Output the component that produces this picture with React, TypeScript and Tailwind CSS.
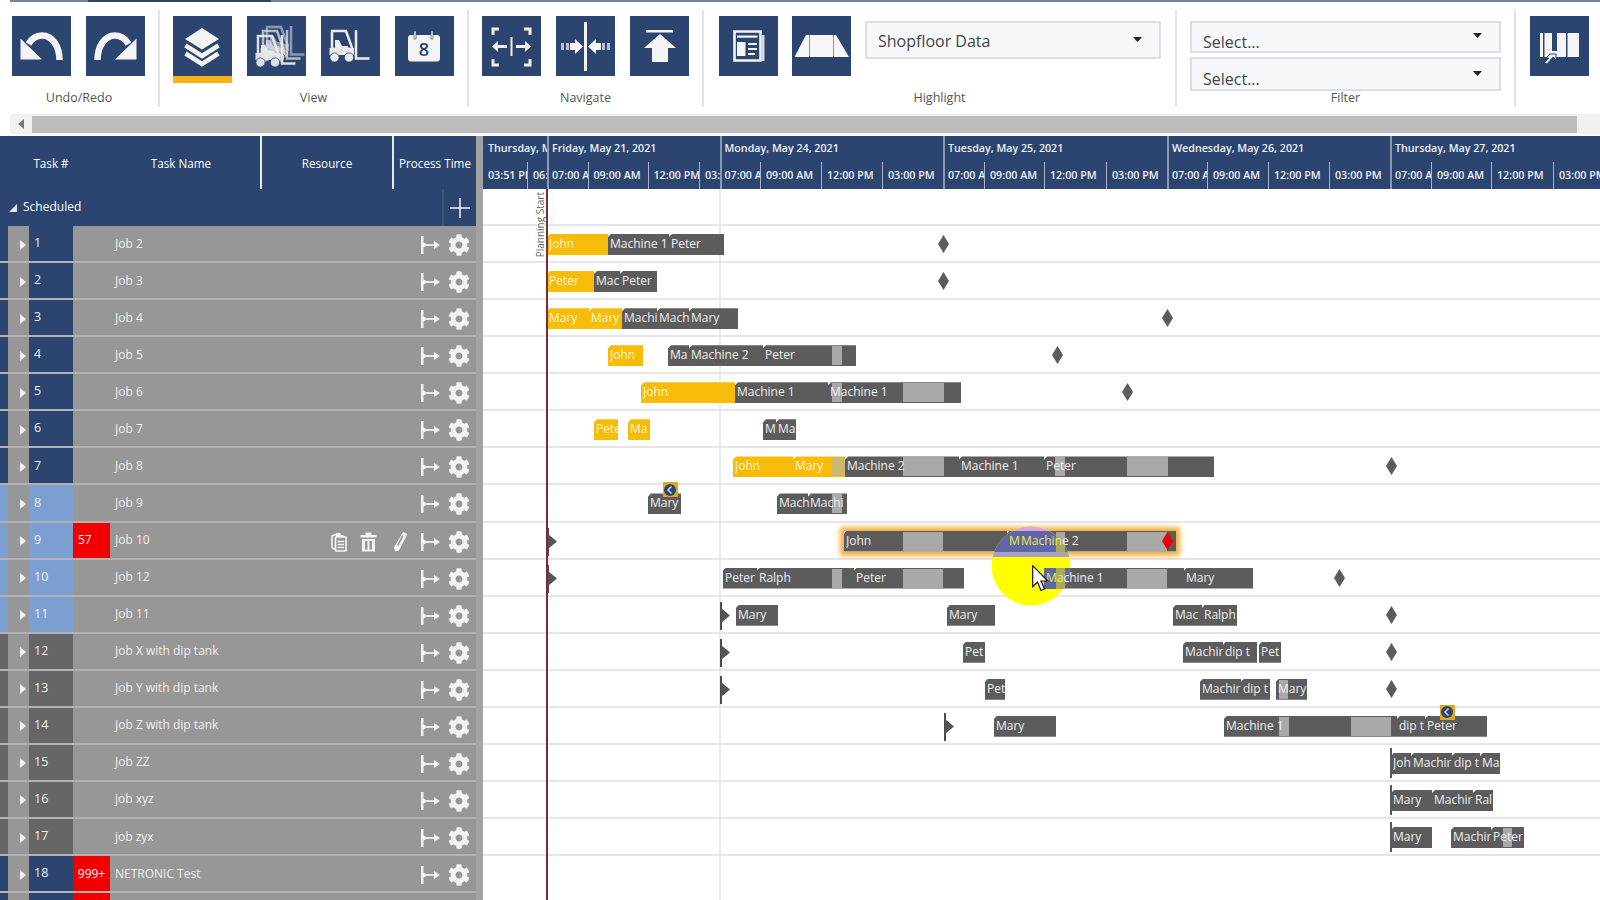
import React from "react";
import { FaCog } from "react-icons/fa";

const NAVY = "bg-[#2b4570]";

function IconBtn({ children, active }: { children: React.ReactNode; active?: boolean }) {
  return (
    <div className="relative w-[59px] h-[60px] shrink-0 bg-[#2b4570]">
      <svg viewBox="0 0 59 60" className="w-full h-full">{children}</svg>
      {active && <div className="absolute left-0 right-0 top-[60px] h-[7px] bg-[#f6b312]" />}
    </div>
  );
}

const Undo = () => (
  <g fill="#f4f4f4">
    <path d="M47.5 44 C47.5 30 40 19.5 30 19.5 C24 19.5 20 22 16.5 28" fill="none" stroke="#f4f4f4" strokeWidth="6.5" />
    <path d="M8.5 22.5 L8.5 43.5 L30 43.5 Z" />
  </g>
);
const Layers = () => (
  <g>
    <path d="M29 12 L46 23 L29 33.5 L12 23 Z" fill="#f4f4f4" />
    <path d="M12.5 29.5 L29 40 L45.5 29.5" fill="none" stroke="#f4f4f4" strokeWidth="4.5" />
    <path d="M12.5 37.5 L29 48 L45.5 37.5" fill="none" stroke="#f4f4f4" strokeWidth="4.5" />
  </g>
);
const Fork = ({ op = 1, dx = 0, dy = 0 }: { op?: number; dx?: number; dy?: number }) => (
  <g transform={`translate(${dx} ${dy})`} opacity={op} fill="none" stroke="#ececec">
    <path d="M35 14 V42.5 H48.5" strokeWidth="2.5" />
    <path d="M11 15 H25 L31.5 33 H11 Z" strokeWidth="2.5" />
    <path d="M14 33 V24 L18 24 L21 30 H27 L28 33 Z" fill="#ececec" stroke="none" />
    <rect x="8.5" y="32" width="24.5" height="7" fill="#ececec" stroke="none" />
    <circle cx="13.5" cy="41.5" r="4.6" fill="#ececec" stroke="#2b4570" strokeWidth="0.8" />
    <circle cx="28" cy="41.5" r="4.6" fill="#ececec" stroke="#2b4570" strokeWidth="0.8" />
  </g>
);
const ManyForks = () => (
  <g>
    <Fork dx={9} dy={-4} op={0.5} />
    <Fork dx={5} dy={0} op={0.7} />
    <Fork dx={0} dy={5} op={0.92} />
  </g>
);
const Calendar = () => (
  <g>
    <rect x="13" y="19" width="32" height="26.5" rx="3" fill="#f4f4f4" />
    <rect x="19" y="15" width="2" height="8" fill="#f4f4f4" stroke="#2b4570" strokeWidth="0.6" />
    <rect x="36" y="15" width="2" height="8" fill="#f4f4f4" stroke="#2b4570" strokeWidth="0.6" />
    <text x="29" y="39.5" textAnchor="middle" fontSize="18" fontWeight="600" fill="#2b4570" fontFamily="Open Sans, sans-serif">8</text>
  </g>
);
const Fit = () => (
  <g fill="none" stroke="#f0f0f0">
    <path d="M17 13 H11 V19 M42 13 H48 V19 M17 49 H11 V43 M42 49 H48 V43" strokeWidth="3" />
    <path d="M29.5 21 V40" strokeWidth="2" />
    <path d="M25 30.5 H15" strokeWidth="3" />
    <path d="M34 30.5 H44" strokeWidth="3" />
    <path d="M10 30.5 L16 25 V36 Z M49 30.5 L43 25 V36 Z" fill="#f0f0f0" stroke="none" />
  </g>
);
const Shrink = () => (
  <g>
    <rect x="28" y="6" width="3" height="49" fill="#f4f4f4" />
    <path d="M5 27 H8 V34 H5 Z M10 27 H13 V34 H10 Z" fill="#b9c2d0" />
    <path d="M14 27 H19 V23 L27 30.5 L19 38 V34 H14 Z" fill="#f4f4f4" />
    <path d="M45 27 H40 V23 L32 30.5 L40 38 V34 H45 Z" fill="#f4f4f4" />
    <path d="M46 27 H49 V34 H46 Z M51 27 H54 V34 H51 Z" fill="#b9c2d0" />
  </g>
);
const ToTop = () => (
  <g fill="#f4f4f4">
    <rect x="16" y="14" width="27" height="2.5" />
    <path d="M30 18 L46 32 H38 V46 H22 V32 H14 Z" />
  </g>
);
const Paper = () => (
  <g>
    <path d="M15.5 15.5 H41.5 V44.5 H15.5 Z" fill="none" stroke="#f4f4f4" strokeWidth="2.6" />
    <path d="M43 19 H45.5 V45 H43 Z" fill="#d5dbe5" />
    <rect x="18" y="19.5" width="20.5" height="2.2" fill="#f4f4f4" />
    <rect x="18" y="26" width="8.5" height="14" fill="#f4f4f4" />
    <path d="M29 28 H38 M29 33 H38 M29 38 H36" stroke="#f4f4f4" strokeWidth="2.2" />
  </g>
);
const Trap = () => (
  <g>
    <path d="M14 19 H44 L57 41 H2.5 Z" fill="#f6f6f6" />
    <path d="M17.5 19 V41 M41.5 19 V41" stroke="#8794a9" strokeWidth="1" />
  </g>
);
const Columns = () => (
  <g>
    <rect x="10" y="17" width="39" height="24" fill="#f4f4f4" />
    <rect x="13" y="17" width="1.5" height="24" fill="#2b4570" />
    <rect x="22" y="17" width="5" height="18" fill="#2b4570" />
    <rect x="36" y="17" width="1.5" height="24" fill="#2b4570" />
    <path d="M14 47 L19 42 H16 L20 38 H26 V44 L23 41 L17 48 Z" fill="#f4f4f4" stroke="#2b4570" strokeWidth="1" />
  </g>
);

const Caret = () => (
  <svg width="9" height="5" viewBox="0 0 9 5" className="shrink-0">
    <path d="M0 0 H9 L4.5 5 Z" fill="#222" />
  </svg>
);

function Group({ cls, label, children }: { cls: string; label: string; children: React.ReactNode }) {
  return (
    <div className={`shrink-0 flex flex-col pt-[14px] ${cls}`}>
      <div className="h-[71px] flex gap-[15px] justify-center">{children}</div>
      <div className="h-[22px] text-center text-[12.5px] leading-[22px] text-[#555]">{label}</div>
    </div>
  );
}
const Sep = () => <div className="shrink-0 w-[2px] h-[97px] mt-[8px] bg-[#e2e2e2]" />;

function Toolbar() {
  return (
    <div className="h-[112px] flex bg-white shrink-0">
      <div className="shrink-0 w-[158px] flex flex-col pt-[14px]">
        <div className="h-[71px] flex gap-[15px] pl-[12px]">
          <IconBtn><Undo /></IconBtn>
          <IconBtn><g transform="translate(59 0) scale(-1 1)"><Undo /></g></IconBtn>
        </div>
        <div className="h-[22px] text-center text-[12.5px] leading-[22px] text-[#555]">Undo/Redo</div>
      </div>
      <Sep />
      <Group cls="w-[307px]" label="View">
        <IconBtn active><Layers /></IconBtn>
        <IconBtn><ManyForks /></IconBtn>
        <IconBtn><Fork /></IconBtn>
        <IconBtn><Calendar /></IconBtn>
      </Group>
      <Sep />
      <Group cls="w-[233px]" label="Navigate">
        <IconBtn><Fit /></IconBtn>
        <IconBtn><Shrink /></IconBtn>
        <IconBtn><ToTop /></IconBtn>
      </Group>
      <Sep />
      <div className="shrink-0 w-[471px] flex flex-col pt-[14px]">
        <div className="h-[71px] flex pl-[15px]">
          <IconBtn><Paper /></IconBtn>
          <div className="w-[14px]" />
          <IconBtn><Trap /></IconBtn>
          <div className="w-[14px]" />
          <div className="mt-[5px] w-[296px] h-[38px] bg-[#f6f8fb] border-2 border-[#d8e0ea] flex items-center justify-between pl-[11px] pr-[17px]">
            <span className="text-[16px] text-[#444] pt-[2px]">Shopfloor Data</span>
            <span className="mb-[2px] flex"><Caret /></span>
          </div>
        </div>
        <div className="h-[22px] text-center text-[12.5px] leading-[22px] text-[#555]">Highlight</div>
      </div>
      <Sep />
      <div className="shrink-0 w-[337px] flex flex-col pt-[19px] pl-[13px] pr-[13px]">
        <div className="h-[32px] bg-[#f6f8fb] border-2 border-[#d8e0ea] flex justify-between pl-[11px] pr-[17px] overflow-hidden">
          <span className="text-[16px] leading-[38px] text-[#444]">Select...</span>
          <span className="mt-[10px]"><Caret /></span>
        </div>
        <div className="mt-[4px] h-[34px] bg-[#f6f8fb] border-2 border-[#d8e0ea] flex justify-between pl-[11px] pr-[17px] overflow-hidden">
          <span className="text-[16px] leading-[40px] text-[#444]">Select...</span>
          <span className="mt-[12px]"><Caret /></span>
        </div>
        <div className="h-[13px] text-center text-[12.5px] leading-[13px] text-[#555]">Filter</div>
      </div>
      <Sep />
      <div className="pt-[14px] pl-[14px]">
        <IconBtn><Columns /></IconBtn>
      </div>
    </div>
  );
}

function ScrollBar() {
  return (
    <div className="h-[20px] ml-[10px] bg-[#f1f1f1] flex items-center shrink-0">
      <div className="w-[22px] flex justify-center">
        <svg width="6" height="10" viewBox="0 0 6 10"><path d="M6 0 V10 L0 5 Z" fill="#777" /></svg>
      </div>
      <div className="w-[1545px] h-[17px] bg-[#bdbdbd]" />
    </div>
  );
}

/* ---------- left grid ---------- */
const Arrow = () => (
  <svg width="21" height="20" viewBox="0 0 21 20" className="shrink-0">
    <path d="M1 1 H3.5 V7.5 L8 10 L3.5 12.5 V19 H1 Z" fill="#f2f2f2" />
    <path d="M7 10 H15" stroke="#f2f2f2" strokeWidth="1.8" />
    <path d="M14 6 L20 10 L14 14 Z" fill="#f2f2f2" />
  </svg>
);
const PasteIcon = () => (
  <svg width="16" height="20" viewBox="0 0 16 20" className="shrink-0">
    <path d="M4.5 2.5 L1 4 V15.5 L4 17.5" fill="none" stroke="#f2f2f2" strokeWidth="1.6" />
    <path d="M4.5 1.5 L8.5 0.5 L10.5 3 H12.5 V5 H4.5 Z" fill="#f2f2f2" />
    <rect x="4.5" y="4.8" width="10.5" height="14.2" rx="1" fill="none" stroke="#f2f2f2" strokeWidth="1.7" />
    <path d="M6.5 9.5 H13 M6.5 12.5 H13 M6.5 15.5 H13" stroke="#f2f2f2" strokeWidth="1.4" />
  </svg>
);
const TrashIcon = () => (
  <svg width="17" height="20" viewBox="0 0 17 20" className="shrink-0">
    <path d="M0.5 3 H16.5 V5.5 H0.5 Z M5.5 0.5 H11.5 V3 H5.5 Z" fill="#f2f2f2" />
    <path d="M2 7 H15 V19.5 H2 Z M5 9 V17.5 H7.5 V9 Z M9.5 9 V17.5 H12 V9 Z" fill="#f2f2f2" fillRule="evenodd" />
  </svg>
);
const PenIcon = () => (
  <svg width="15" height="21" viewBox="0 0 15 21" className="shrink-0">
    <path d="M10 1 L14.5 3 L6 19.5 L2 20.5 L1 16.5 Z M10.5 5 L9 4.2 L4 14 L5.5 15 Z" fill="#f2f2f2" fillRule="evenodd" />
  </svg>
);

type RowDef = { n: number; name: string; tone: "navy" | "blue" | "gray"; badge?: string };
const names = [
  "Job 2", "Job 3", "Job 4", "Job 5", "Job 6", "Job 7", "Job 8", "Job 9", "Job 10", "Job 12", "Job 11",
  "Job X with dip tank", "Job Y with dip tank", "Job Z with dip tank", "Job ZZ", "job xyz", "job zyx", "NETRONIC Test",
];
const rows: RowDef[] = names.map((name, i) => {
  const n = i + 1;
  const tone = n <= 7 || n === 18 ? "navy" : n <= 11 ? "blue" : "gray";
  const badge = n === 9 ? "57" : n === 18 ? "999+" : undefined;
  return { n, name, tone, badge };
});
const toneCls = { navy: "bg-[#2b4570]", blue: "bg-[#7b9fd1]", gray: "bg-[#666666]" };

function GridRow({ r }: { r: RowDef }) {
  return (
    <div className="h-[37.07px] flex shrink-0 bg-[#979797] border-b-2 border-[#b3b3b3] text-[12px] text-[#f0f0f0]">
      <div className={`w-[8px] ${toneCls[r.tone]}`} />
      <div className="w-[21px] flex items-center justify-center pt-[2px] pl-[8px]">
        <svg width="6" height="10" viewBox="0 0 6 10"><path d="M0 0 L6 5 L0 10 Z" fill="#f0f0f0" /></svg>
      </div>
      <div className={`w-[44px] pl-[5px] flex items-center text-[12.5px] ${toneCls[r.tone]}`}>{r.n}</div>
      <div className={`w-[37px] flex items-center ${r.badge ? "bg-[#f20000]" : ""} ${r.badge === "57" ? "pl-[5px]" : "justify-center"}`}>{r.badge}</div>
      <div className="flex-1 pl-[5px] flex items-center">{r.name}</div>
      <div className="flex items-center pt-[3px] pr-[6px]">
        {r.n === 9 && (
          <div className="flex items-center mr-[12px]">
            <PasteIcon />
            <div className="w-[13px]" />
            <TrashIcon />
            <div className="w-[16px]" />
            <PenIcon />
          </div>
        )}
        <Arrow />
        <div className="w-[7px]" />
        <FaCog size={22} color="#f2f2f2" />
      </div>
    </div>
  );
}

function LeftPanel() {
  return (
    <div className="w-[476px] shrink-0 flex flex-col overflow-hidden">
      <div className={`h-[53px] flex shrink-0 ${NAVY} text-white text-[11.7px]`}>
        <div className="w-[102px] flex items-center justify-center pt-[2px]">Task #</div>
        <div className="w-[158px] flex items-center justify-center pt-[2px]">Task Name</div>
        <div className="w-[132px] border-l-2 border-[#e8e8e8] flex items-center justify-center pt-[2px]">Resource</div>
        <div className="w-[84px] border-l-2 border-[#e8e8e8] flex items-center justify-center pt-[2px] whitespace-nowrap">Process Time</div>
      </div>
      <div className={`h-[37px] flex shrink-0 items-center ${NAVY} text-white text-[12px]`}>
        <svg width="8" height="8" viewBox="0 0 8 8" className="ml-[9px]"><path d="M8 0 V8 H0 Z" fill="#e8e8e8" /></svg>
        <span className="ml-[6px] flex-1 pb-[2px]">Scheduled</span>
        <div className="w-[34px] h-full border-l-2 border-[#3c5478] flex items-center justify-center pr-[1px]">
          <svg width="20" height="20" viewBox="0 0 20 20"><path d="M10 0 V20 M0 10 H20" stroke="#f4f4f4" strokeWidth="1.5" /></svg>
        </div>
      </div>
      {rows.map((r) => <GridRow key={r.n} r={r} />)}
      <div className="h-[8px] flex bg-[#979797] shrink-0">
        <div className="w-[8px] bg-[#2b4570]" />
        <div className="w-[21px]" />
        <div className="w-[44px] bg-[#2b4570]" />
        <div className="w-[37px] bg-[#f20000]" />
      </div>
    </div>
  );
}

/* ---------- timeline header ---------- */
const days: { label: string; w: number; ticks: [string, number][] }[] = [
  { label: "Thursday, May 20, 2021", w: 64, ticks: [["03:51 PM", 44], ["06:00 PM", 20]] },
  { label: "Friday, May 21, 2021", w: 172.5, ticks: [["07:00 AM", 40.5], ["09:00 AM", 60], ["12:00 PM", 51.5], ["03:00 PM", 20.5]] },
  { label: "Monday, May 24, 2021", w: 223.5, ticks: [["07:00 AM", 40.5], ["09:00 AM", 61], ["12:00 PM", 61], ["03:00 PM", 61]] },
  { label: "Tuesday, May 25, 2021", w: 224, ticks: [["07:00 AM", 41], ["09:00 AM", 60], ["12:00 PM", 62], ["03:00 PM", 61]] },
  { label: "Wednesday, May 26, 2021", w: 223, ticks: [["07:00 AM", 40], ["09:00 AM", 61], ["12:00 PM", 61], ["03:00 PM", 61]] },
  { label: "Thursday, May 27, 2021", w: 210, ticks: [["07:00 AM", 41], ["09:00 AM", 60], ["12:00 PM", 62], ["03:00 PM", 47]] },
];

function TimeHeader() {
  return (
    <div className={`h-[53px] flex shrink-0 ${NAVY} text-[10.7px] text-[#eef1f6] overflow-hidden`}>
      {days.map((d, i) => (
        <div key={i} style={{ width: d.w }} className="shrink-0 flex flex-col relative">
          {i > 0 && <div className="absolute left-0 top-0 bottom-0 w-[2px] bg-[#8d98aa]" />}
          <div className="h-[26px] pl-[5px] leading-[25px] overflow-hidden whitespace-nowrap font-semibold">{d.label}</div>
          <div className="h-[27px] flex">
            {d.ticks.map(([t, w], j) => (
              <div
                key={j}
                style={{ width: w }}
                className={`shrink-0 pl-[5px] leading-[27px] overflow-hidden whitespace-nowrap font-semibold ${j > 0 ? "border-l border-[#aab3c2]" : ""}`}
              >
                {t}
              </div>
            ))}
          </div>
        </div>
      ))}
    </div>
  );
}

/* ---------- gantt ---------- */
type Task = [number, number, "y" | "d", React.ReactNode?];
type GRow = {
  tasks: Task[];
  lights?: [number, number, string?][];
  diamond?: number;
  marker?: number;
  tick?: number;
  badge?: number;
};
const Y1 = "text-[#e9ea4d]";
const gantt: GRow[] = [
  { tasks: [[547, 608, "y", "John"], [608, 669, "d", "Machine 1"], [669, 724, "d", "Peter"]], diamond: 943 },
  { tasks: [[547, 594, "y", "Peter"], [594, 620, "d", "Mac"], [620, 657, "d", "Peter"]], diamond: 943 },
  { tasks: [[547, 589, "y", "Mary"], [589, 622, "y", "Mary"], [622, 657, "d", "Machi"], [657, 689, "d", "Mach"], [689, 738, "d", "Mary"]], diamond: 1167 },
  { tasks: [[608, 643, "y", "John"], [668, 689, "d", "Ma"], [689, 763, "d", "Machine 2"], [763, 856, "d", "Peter"]], lights: [[832, 842]], diamond: 1057 },
  { tasks: [[641, 735, "y", "John"], [735, 828, "d", "Machine 1"], [828, 961, "d", "Machine 1"]], lights: [[832, 842], [903, 944]], diamond: 1127 },
  { tasks: [[594, 618, "y", "Pete"], [628, 650, "y", "Ma"], [763, 776, "d", "M"], [776, 796, "d", "Ma"]] },
  { tasks: [[733, 793, "y", "John"], [793, 845, "y", "Mary"], [845, 959, "d", "Machine 2"], [959, 1044, "d", "Machine 1"], [1044, 1214, "d", "Peter"]], lights: [[832, 845, "#cbb871"], [903, 944], [1055, 1065], [1127, 1168]], diamond: 1391 },
  { tasks: [[648, 681, "d", "Mary"], [777, 808, "d", "Mach"], [808, 847, "d", "Machi"]], lights: [[832, 842]], badge: 670 },
  { tasks: [[844, 1007, "d", "John"], [1007, 1019, "d", <span className={Y1}>M</span>], [1019, 1176, "d", <><span className={Y1}>Machin</span>e 2</>]], lights: [[903, 943], [1056, 1065], [1127, 1167]], marker: 548 },
  { tasks: [[723, 757, "d", "Peter"], [757, 854, "d", "Ralph"], [854, 964, "d", "Peter"], [1044, 1184, "d", <><span className={Y1}>Ma</span>chine 1</>], [1184, 1253, "d", "Mary"]], lights: [[832, 842], [903, 943], [1056, 1065], [1127, 1167]], marker: 548, diamond: 1339 },
  { tasks: [[736, 778, "d", "Mary"], [947, 995, "d", "Mary"], [1173, 1202, "d", "Mac"], [1202, 1237, "d", "Ralph"]], marker: 721, diamond: 1391 },
  { tasks: [[963, 985, "d", "Pet"], [1183, 1223, "d", "Machir"], [1223, 1257, "d", "dip t"], [1259, 1281, "d", "Pet"]], marker: 721, diamond: 1391 },
  { tasks: [[985, 1005, "d", "Pet"], [1200, 1241, "d", "Machir"], [1241, 1270, "d", "dip t"], [1276, 1307, "d", "Mary"]], lights: [[1279, 1288]], marker: 721, diamond: 1391 },
  { tasks: [[994, 1056, "d", "Mary"], [1224, 1397, "d", "Machine 1"], [1397, 1425, "d", "dip t"], [1425, 1487, "d", "Peter"]], lights: [[1279, 1289], [1351, 1391]], marker: 945, badge: 1447 },
  { tasks: [[1391, 1411, "d", "Joh"], [1411, 1452, "d", "Machir"], [1452, 1480, "d", "dip t"], [1480, 1500, "d", "Ma"]], tick: 1391 },
  { tasks: [[1391, 1432, "d", "Mary"], [1432, 1473, "d", "Machir"], [1473, 1493, "d", "Ral"]], tick: 1391 },
  { tasks: [[1391, 1432, "d", "Mary"], [1451, 1491, "d", "Machir"], [1491, 1524, "d", "Peter"]], lights: [[1503, 1512]], tick: 1391 },
];
const X0 = 483;

const Diamond = ({ x, color, h = 18 }: { x: number; color: string; h?: number }) => (
  <svg width="11" height={h} viewBox={`0 0 11 ${h}`} style={{ left: x - X0 - 5.5, top: 18 - h / 2 }} className="absolute z-[5]">
    <polygon points={`5.5,0 11,${h / 2} 5.5,${h} 0,${h / 2}`} fill={color} />
  </svg>
);
const MiniBadge = ({ x }: { x: number }) => (
  <div style={{ left: x - X0 - 7.5 }} className="absolute top-[-3px] w-[15px] h-[15px] z-[6] bg-[#e0a91f] flex items-center justify-center">
    <svg width="12" height="12" viewBox="0 0 12 12">
      <circle cx="6" cy="6" r="6" fill="#2b4570" />
      <path d="M7.5 2.5 L4 6 L7.5 9.5" fill="none" stroke="#cfd8e6" strokeWidth="1.6" />
    </svg>
  </div>
);

function GanttRow({ g, i }: { g: GRow; i: number }) {
  return (
    <div className="relative h-[37.07px] shrink-0 border-b-2 border-[#e6e6e6]">
      {i === 8 && (
        <div style={{ left: 844 - X0, width: 332 }} className="absolute top-[8px] h-[21px] shadow-[0_0_5px_4px_#f5b13d]" />
      )}
      {g.marker && (
        <>
          <div style={{ left: g.marker - X0 - 1 }} className="absolute top-[5px] h-[28px] w-[2px] bg-[#4c4c4c]" />
          <svg width="9" height="15" viewBox="0 0 9 15" style={{ left: g.marker - X0 }} className="absolute top-[11px]">
            <path d="M0 0 L9 7.5 L0 15 Z" fill="#555" />
          </svg>
        </>
      )}
      {g.tick && <div style={{ left: g.tick - X0 - 1 }} className="absolute top-[3px] h-[30px] w-[2px] bg-[#555]" />}
      {g.tasks.map(([a, b, c], k) => (
        <div
          key={k}
          style={{ left: a - X0, width: b - a }}
          className={`absolute top-[8px] h-[21px] [clip-path:polygon(3px_0,100%_0,100%_100%,0_100%,0_3px)] ${c === "y" ? "bg-[#f7bc0a]" : "bg-[#5c5c5c]"}`}
        />
      ))}
      {g.lights?.map(([a, b, col], k) => (
        <div
          key={k}
          style={{ left: a - X0, width: b - a, backgroundColor: col ?? "#a9a9a9" }}
          className="absolute top-[9px] h-[19px]"
        />
      ))}
      {g.diamond && <Diamond x={g.diamond} color="#5c5c5c" />}
      {i === 8 && <Diamond x={1167} color="#ee0000" />}
      {g.badge && <MiniBadge x={g.badge} />}
      {g.tasks.map(([a, b, c, t], k) => (
        <div
          key={k}
          style={{ left: a - X0 + 2, width: b - a - 1 }}
          className={`absolute z-20 top-[8px] h-[21px] leading-[19px] text-[12px] whitespace-nowrap overflow-hidden ${c === "y" ? "text-[#fdf3cf]" : "text-[#f0f0f0]"}`}
        >
          {t}
        </div>
      ))}
    </div>
  );
}

function Highlight() {
  return (
    <>
      <svg width="80" height="80" viewBox="0 0 80 80" style={{ left: 991 - X0, top: 526 - 189 }} className="absolute z-10">
        <defs>
          <clipPath id="spot"><circle cx="40" cy="40" r="39.5" /></clipPath>
        </defs>
        <g clipPath="url(#spot)">
          <rect width="80" height="80" fill="#ffff00" />
          <rect x="0" y="0" width="80" height="5" fill="#e2a4d4" />
          <rect x="0" y="5" width="80" height="21" fill="#5e66a6" />
          <rect x="0" y="26" width="80" height="5" fill="#a8a0c0" />
          <rect x="65" y="5" width="9" height="21" fill="#a9a85c" />
          <rect x="53" y="42" width="27" height="21" fill="#5e66a6" />
          <rect x="65" y="42" width="9" height="21" fill="#a9a85c" />
        </g>
      </svg>
      <svg width="18" height="27" viewBox="0 0 18 27" style={{ left: 1032 - X0, top: 565 - 189 }} className="absolute z-30">
        <path d="M0.7 0.7 V21.5 L5.5 17 L9 25.5 L12.5 24 L9 16 H15.8 Z" fill="#fff" stroke="#111" strokeWidth="1.2" />
      </svg>
    </>
  );
}

function Chart() {
  return (
    <div className="flex-1 flex flex-col min-w-0">
      <TimeHeader />
      <div className="relative flex-1 overflow-hidden flex flex-col bg-white">
        <div className="h-[37px] shrink-0 border-b-2 border-[#e6e6e6]" />
        <div className="absolute left-[236px] top-0 bottom-0 w-[2px] bg-[#e8ebf0]" />
        {gantt.map((g, i) => <GanttRow key={i} g={g} i={i} />)}
        <div className="absolute left-[63px] top-0 bottom-0 w-[2px] bg-[#7b2d2d]" />
        <div className="absolute left-[52px] top-[3px] text-[10px] leading-[11px] text-[#666] [writing-mode:vertical-rl] rotate-180 whitespace-nowrap">
          Planning Start
        </div>
        <Highlight />
      </div>
    </div>
  );
}

export default function App() {
  return (
    <div className="w-[1600px] h-[900px] overflow-hidden bg-white flex flex-col font-['Open_Sans',sans-serif]">
      <div className="h-[2px] ml-[10px] bg-[#76829a] shrink-0 flex">
        <div className="ml-[78px] w-[183px] bg-[#2b4570]" />
      </div>
      <Toolbar />
      <ScrollBar />
      <div className="h-[2px] shrink-0" />
      <div className="flex flex-1 min-h-0">
        <LeftPanel />
        <div className="w-[7px] shrink-0 bg-[#a3a3a3]" />
        <Chart />
      </div>
    </div>
  );
}
